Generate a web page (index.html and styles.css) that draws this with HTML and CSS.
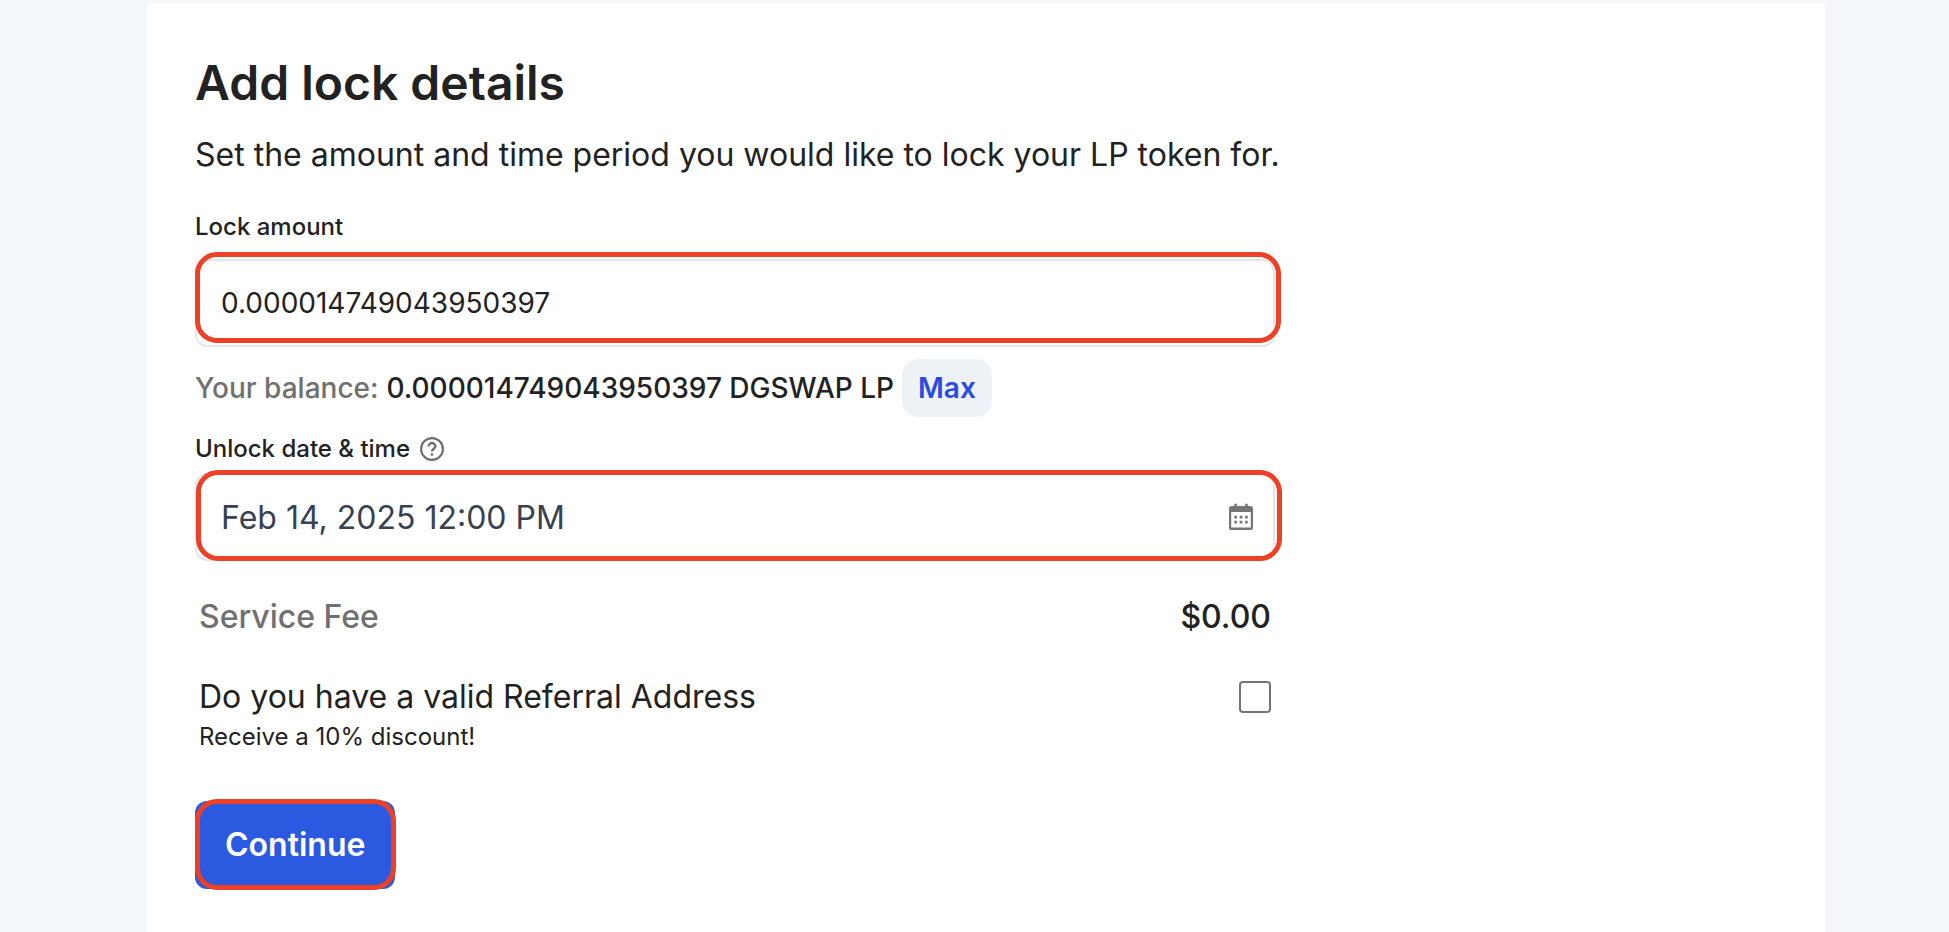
FILE: index.html
```html
<!DOCTYPE html>
<html lang="en">
<head>
<meta charset="utf-8">
<meta name="viewport" content="width=device-width, initial-scale=1">
<title>Add lock details</title>
<link rel="stylesheet" href="styles.css">
</head>
<body>
<main class="card">
  <h1 class="title">Add lock details</h1>
  <p class="intro">Set the amount and time period you would like to lock your LP token for.</p>
  <form class="form">
    <label class="label label-amount" for="amount">Lock amount</label>
    <div class="field field-amount">
      <input class="input input-amount" id="amount" type="text" inputmode="decimal" value="0.000014749043950397">
    </div>
    <div class="balance">
      <span class="muted">Your balance:</span>
      <span class="balance-value">0.000014749043950397 DGSWAP LP</span>
      <button class="max" type="button">Max</button>
    </div>
    <div class="label-row">
      <label class="label" for="unlock">Unlock date &amp; time</label>
      <svg class="help" viewBox="0 0 24 24" role="img" aria-label="Help">
        <circle cx="12" cy="12" r="10.900" fill="none" stroke="currentColor" stroke-width="2.200"/>
        <path d="M8.600 9.400a3.400 3.400 0 0 1 6.800 0c0 2.200-3.400 2.500-3.400 5" fill="none" stroke="currentColor" stroke-width="2.300"/>
        <path d="M10.800 16.300h2.400v2.400h-2.400z" fill="currentColor"/>
      </svg>
    </div>
    <div class="field field-date">
      <input class="input input-date" id="unlock" type="text" value="Feb 14, 2025 12:00 PM">
      <svg class="calendar" viewBox="0 0 24 28" aria-hidden="true">
        <path fill="currentColor" fill-rule="evenodd" d="M5.300 0.700h2.600V3h8.200V0.700h2.600V3H21.500A2.500 2.500 0 0 1 24 5.500v19a2.500 2.500 0 0 1-2.500 2.500h-19A2.500 2.500 0 0 1 0 24.500v-19A2.500 2.500 0 0 1 2.500 3h2.800zM2.200 9v15.600h19.600V9z"/>
        <path fill="currentColor" d="M5.300 12.800h2.600v2.600H5.300zM10.700 12.800h2.600v2.600h-2.600zM16.100 12.800h2.600v2.600h-2.600zM5.300 17.800h2.600v2.600H5.300zM10.700 17.800h2.600v2.600h-2.600zM16.100 17.800h2.600v2.600h-2.600z"/>
      </svg>
    </div>
    <div class="row row-fee">
      <span class="muted">Service Fee</span>
      <span class="fee">$0.00</span>
    </div>
    <div class="row row-referral">
      <label for="referral">Do you have a valid Referral Address</label>
      <input class="check" id="referral" type="checkbox">
    </div>
    <p class="note">Receive a 10% discount!</p>
    <button class="continue" type="submit">Continue</button>
  </form>
</main>
</body>
</html>
```
FILE: styles.css
```css
* {
  box-sizing: border-box;
}

body {
  margin: 0;
  padding: 3px 124px 0 147px;
  min-height: 100vh;
  display: flex;
  background: #f3f7fa;
  color: #222;
  font-family: Inter, "Liberation Sans", sans-serif;
  font-size: 32px;
  line-height: 40px;
}

input,
button {
  font: inherit;
  color: inherit;
}

.card {
  flex: 1;
  padding: 48px 48px 40px;
  background: #fff;
}

.title {
  margin: 0 0 20px;
  font-size: 48px;
  line-height: 64px;
  font-weight: 600;
}

.intro {
  margin: 0 0 36px;
}

.form {
  max-width: 1080px;
  display: flex;
  flex-direction: column;
}

.label {
  font-size: 24px;
  line-height: 32px;
  font-weight: 500;
}

.label-amount {
  margin-bottom: 16px;
}

.label-row {
  display: flex;
  align-items: center;
  gap: 10px;
  margin: 16px 0 8px;
}

.help {
  width: 24px;
  height: 24px;
  color: #707070;
}

.field {
  position: relative;
  display: flex;
  align-items: center;
  height: 88px;
  padding: 0 20px 0 24px;
  border: 2px solid #e5e5ea;
  border-radius: 12px;
}

/* highlight frames drawn over the controls */
.field::after,
.continue::after {
  content: "";
  position: absolute;
  border: 5px solid #ec4027;
  border-radius: 22px;
  pointer-events: none;
}

.field-amount::after {
  inset: -9px -8px 2px -2px;
}

.field-date::after {
  inset: -5px -9px -2px -1px;
}

.input {
  flex: 1;
  min-width: 0;
  padding: 0;
  border: 0;
  outline: 0;
  background: none;
}

.input-amount {
  font-size: 28px;
}

.input-date {
  padding-top: 2px;
  color: #374151;
}

.calendar {
  width: 24px;
  height: 28px;
  color: #757575;
}

.balance {
  display: flex;
  align-items: center;
  gap: 8px;
  margin-top: 12px;
  font-size: 28px;
  font-weight: 500;
}

.muted {
  color: #707070;
  font-weight: 500;
}

.max {
  height: 58px;
  padding: 0 16px;
  border: 0;
  border-radius: 16px;
  background: #edf2f7;
  color: #2b4ae2;
  font-weight: 600;
}

.row {
  display: flex;
  align-items: center;
  justify-content: space-between;
  padding: 0 4px;
}

.row-fee {
  margin: 36px 0 40px;
}

.fee {
  font-weight: 500;
}

.check {
  appearance: none;
  width: 32px;
  height: 32px;
  margin: 0;
  border: 2px solid #757575;
  border-radius: 4px;
  background: #fff;
}

.note {
  margin: 4px 4px 48px;
  font-size: 24px;
  line-height: 32px;
}

.continue {
  position: relative;
  align-self: flex-start;
  height: 88px;
  padding: 0 30px;
  border: 0;
  border-radius: 12px;
  background: #2b59e0;
  color: #fff;
  font-weight: 600;
}

.continue::after {
  inset: -2px -1px -1px 0;
}
```
